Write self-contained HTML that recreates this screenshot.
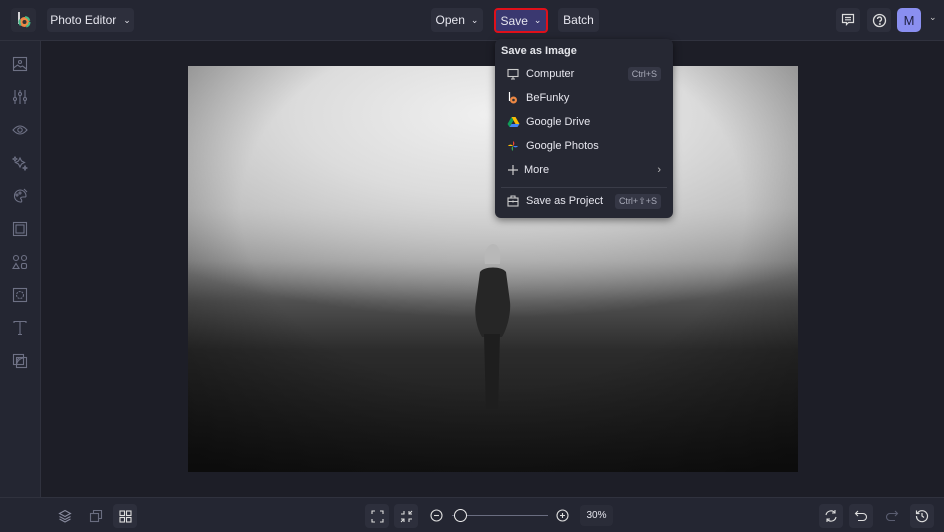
<!DOCTYPE html><html><head><style>
*{margin:0;padding:0;box-sizing:border-box}
body{width:944px;height:532px;background:#1d1e27;font-family:"Liberation Sans",sans-serif;position:relative;overflow:hidden;color:#e4e5ea}
.top{position:absolute;left:0;top:0;width:944px;height:41px;background:#242632;border-bottom:1px solid #30323e}
.side{position:absolute;left:0;top:41px;width:41px;height:456px;background:#242632;border-right:1px solid #30323e}
.bot{position:absolute;left:0;top:497px;width:944px;height:35px;background:#242632;border-top:1px solid #30323e}
.btn{position:absolute;background:#2d2f3c;border-radius:4px;font-size:12px;color:#e6e6ee;display:flex;align-items:center;justify-content:center}
.ib{position:absolute;width:24px;height:24px;background:#2d2f3c;border-radius:4px;display:flex;align-items:center;justify-content:center}
svg{display:block}
.photo{position:absolute;left:188px;top:66px;width:610px;height:406px;overflow:hidden;background:
radial-gradient(ellipse 80% 50% at 50% 12%,#f0f0f0 0%,#dcdcdc 40%,rgba(190,190,190,0) 100%),
linear-gradient(180deg,#b0b0b0 0%,#a8a8a8 35%,#8a8a8a 48%,#505050 58%,#2c2c2c 70%,#151515 100%)}
.vig{position:absolute;inset:0;background:radial-gradient(ellipse 75% 80% at 50% 35%,rgba(0,0,0,0) 55%,rgba(0,0,0,.45) 100%)}
.dd{position:absolute;left:495px;top:39px;width:178px;height:179px;background:#262833;border-radius:6px;box-shadow:0 2px 8px rgba(0,0,0,.5);font-size:11px}
.it{position:absolute;left:0;width:178px;height:20px;display:flex;align-items:center;padding-left:31px;color:#e6e6ee}
.ic{position:absolute;left:12px;top:4px}
.kb{position:absolute;right:12px;top:3px;background:#353745;color:#a8aab8;font-size:9px;padding:2px 4px;border-radius:3px}
.si{position:absolute;left:12px;width:16px;height:16px}
</style></head><body>
<div class="top"></div><div class="side"></div><div class="bot"></div>
<div class="ib" style="left:11px;top:8px;width:25px;background:#2a2c38"><svg width="16" height="18" viewBox="0 0 16 18"><path d="M3 1v12" stroke="#fff" stroke-width="1.6"/><circle cx="8.5" cy="11" r="5" fill="#e84"/><circle cx="8.5" cy="11" r="5" fill="none" stroke="#4b8" stroke-width="2" stroke-dasharray="6 6"/><circle cx="8.5" cy="11" r="2" fill="#333"/></svg></div>
<div class="btn" style="left:47px;top:8px;width:87px;height:24px">Photo Editor <span style="margin-left:7px;font-size:9px">⌄</span></div>
<div class="btn" style="left:431px;top:8px;width:52px;height:24px">Open <span style="margin-left:6px;font-size:9px">⌄</span></div>
<div class="btn" style="left:494px;top:8px;width:54px;height:25px;background:#3a3870;border:2px solid #e0101a">Save <span style="margin-left:6px;font-size:9px">⌄</span></div>
<div class="btn" style="left:558px;top:8px;width:41px;height:24px">Batch</div>
<div class="ib" style="left:836px;top:8px"><svg width="14" height="14" viewBox="0 0 14 14" fill="none" stroke="#ddd" stroke-width="1.2"><path d="M1.5 1.5h11v8h-5l-2 2v-2h-4z M4 4.5h6M4 6.8h6"/></svg></div>
<div class="ib" style="left:867px;top:8px"><svg width="15" height="15" viewBox="0 0 15 15" fill="none" stroke="#ddd" stroke-width="1.3"><circle cx="7.5" cy="7.5" r="6"/><path d="M5.5 6a2 2 0 1 1 2.5 2v1.3"/><circle cx="7.8" cy="11" r=".4"/></svg></div>
<div style="position:absolute;left:897px;top:8px;width:24px;height:24px;background:#8a8ff0;border-radius:5px;color:#1d1e40;font-size:13px;display:flex;align-items:center;justify-content:center">M</div>
<div style="position:absolute;left:929px;top:12px;font-size:9px;color:#ccc">⌄</div>
<svg class="si" style="top:56px" viewBox="0 0 16 16" fill="none" stroke="#6e7185" stroke-width="1.1"><rect x="1.5" y="1.5" width="13" height="13"/><circle cx="8" cy="6" r="1.5"/><path d="M1.5 12l4-3 3 2 2-1 4 3"/></svg>
<svg class="si" style="top:89px" viewBox="0 0 16 16" fill="none" stroke="#6e7185" stroke-width="1.1"><path d="M3 1v14M8 1v14M13 1v14"/><circle cx="3" cy="10" r="1.5" fill="#242632"/><circle cx="8" cy="5" r="1.5" fill="#242632"/><circle cx="13" cy="10" r="1.5" fill="#242632"/></svg>
<svg class="si" style="top:122px" viewBox="0 0 16 16" fill="none" stroke="#6e7185" stroke-width="1.1"><path d="M1 8q7-8 14 0q-7 8-14 0z"/><circle cx="8" cy="8" r="2.2"/></svg>
<svg class="si" style="top:155px" viewBox="0 0 16 16" fill="none" stroke="#6e7185" stroke-width="1.1"><path d="M8 3l1.5 3 3 1.5-3 1.5L8 12 6.5 9 3.5 7.5l3-1.5z M3 2l.7 1.3L5 4l-1.3.7L3 6 2.3 4.7 1 4l1.3-.7z M13 11l.6 1.4 1.4.6-1.4.6L13 15l-.6-1.4L11 13l1.4-.6z"/></svg>
<svg class="si" style="top:188px" viewBox="0 0 16 16" fill="none" stroke="#6e7185" stroke-width="1.1"><path d="M8 2a6 6 0 1 0 1 12c1 0 1-2 0-3s0-2 2-2h2a1 1 0 0 0 1-1A6 6 0 0 0 8 2z"/><circle cx="5" cy="7" r="1"/><circle cx="8" cy="5" r="1"/><path d="M12 1l3 3"/></svg>
<svg class="si" style="top:221px" viewBox="0 0 16 16" fill="none" stroke="#6e7185" stroke-width="1.1"><rect x="1.5" y="1.5" width="13" height="13"/><rect x="4" y="4" width="8" height="8"/></svg>
<svg class="si" style="top:254px" viewBox="0 0 16 16" fill="none" stroke="#6e7185" stroke-width="1.1"><circle cx="4" cy="4" r="2.5"/><circle cx="12" cy="4" r="2.5"/><path d="M4 9.5l3 5H1z"/><rect x="9.5" y="9.5" width="5" height="5" rx="1.5"/></svg>
<svg class="si" style="top:287px" viewBox="0 0 16 16" fill="none" stroke="#6e7185" stroke-width="1.1"><rect x="1.5" y="1.5" width="13" height="13"/><circle cx="8" cy="8" r="3.5" stroke-dasharray="2 1"/></svg>
<svg class="si" style="top:320px" viewBox="0 0 16 16" fill="none" stroke="#6e7185" stroke-width="1.1"><path d="M2 3V1.5h12V3M8 1.5v13M6 14.5h4"/></svg>
<svg class="si" style="top:353px" viewBox="0 0 16 16" fill="none" stroke="#6e7185" stroke-width="1.1"><rect x="1.5" y="1.5" width="10" height="10"/><rect x="4.5" y="4.5" width="10" height="10"/><path d="M4.5 9a5 5 0 0 1 5-4.5M4.5 12a8 8 0 0 1 7-7"/></svg>
<div class="photo"><div class="vig"></div>
<svg style="position:absolute;left:280px;top:176px" width="50" height="170" viewBox="0 0 50 170"><path d="M17 22c-2-10 2-20 8-20s8 8 7 20z" fill="#b8b8b8"/><path d="M12 30c4-6 22-6 26 0l4 30c1 10-2 25-8 35H14c-6-10-8-25-6-35z" fill="#262626"/><path d="M16 92h16l-2 75h-12z" fill="#1e1e1e"/></svg>
</div>
<div class="dd">
<div style="position:absolute;left:6px;top:6px;font-weight:bold;font-size:11px">Save as Image</div>
<div class="it" style="top:25px"><svg class="ic" width="12" height="12" viewBox="0 0 12 12" fill="none" stroke="#ccc" stroke-width="1.1"><rect x="1" y="1.5" width="10" height="7"/><path d="M4 11h4M6 8.5v2.5"/></svg>Computer<span class="kb">Ctrl+S</span></div>
<div class="it" style="top:49px"><svg class="ic" width="12" height="12" viewBox="0 0 12 12"><path d="M2.5 0v9" stroke="#fff" stroke-width="1.2"/><circle cx="6.5" cy="8" r="3.5" fill="#e84"/><circle cx="6.5" cy="8" r="1.3" fill="#333"/></svg>BeFunky</div>
<div class="it" style="top:73px"><svg class="ic" width="13" height="12" viewBox="0 0 13 12"><path d="M4.5 1h4l4 7h-4z" fill="#fbbc04"/><path d="M4.5 1l2 3.5L2.5 11 .5 8z" fill="#0f9d58"/><path d="M2.5 11l2-3h8l-2 3z" fill="#4285f4"/></svg>Google Drive</div>
<div class="it" style="top:97px"><svg class="ic" width="12" height="12" viewBox="0 0 12 12"><path d="M6 6V1a3 3 0 0 1 0 5z" fill="#ea4335"/><path d="M6 6h5a3 3 0 0 1-5 0z" fill="#4285f4"/><path d="M6 6v5a3 3 0 0 1 0-5z" fill="#34a853"/><path d="M6 6H1a3 3 0 0 1 5 0z" fill="#fbbc04"/></svg>Google Photos</div>
<div class="it" style="top:121px;padding-left:29px"><svg class="ic" width="12" height="12" viewBox="0 0 12 12" stroke="#ccc" stroke-width="1.2"><path d="M6 1v10M1 6h10"/></svg>More<span style="position:absolute;right:12px;color:#bbb">›</span></div>
<div style="position:absolute;left:6px;right:6px;top:148px;border-top:1px solid #3a3c48"></div>
<div class="it" style="top:152px"><svg class="ic" width="12" height="12" viewBox="0 0 12 12" fill="none" stroke="#ccc" stroke-width="1.1"><rect x="1" y="3" width="10" height="8"/><path d="M4 3V1h4v2M1 6.5h10M6 5.5v2"/></svg>Save as Project<span class="kb">Ctrl+⇧+S</span></div>
</div>
<div class="ib" style="left:53px;top:504px;background:none"><svg width="14" height="14" viewBox="0 0 14 14" fill="none" stroke="#8a8da0" stroke-width="1.1"><path d="M7 1.5l5.5 3L7 7.5 1.5 4.5z M1.5 7.5L7 10.5l5.5-3M1.5 10l5.5 3 5.5-3"/></svg></div>
<div class="ib" style="left:84px;top:504px;background:none"><svg width="14" height="14" viewBox="0 0 14 14" fill="none" stroke="#6a6d80" stroke-width="1.1"><rect x="1.5" y="4.5" width="8" height="8"/><path d="M4.5 4.5v-3h8v8h-3"/></svg></div>
<div class="ib" style="left:113px;top:504px"><svg width="13" height="13" viewBox="0 0 13 13" fill="none" stroke="#ddd" stroke-width="1.1"><rect x="1" y="1" width="4.5" height="4.5"/><rect x="7.5" y="1" width="4.5" height="4.5"/><rect x="1" y="7.5" width="4.5" height="4.5"/><rect x="7.5" y="7.5" width="4.5" height="4.5"/></svg></div>
<div class="ib" style="left:365px;top:504px"><svg width="13" height="13" viewBox="0 0 13 13" fill="none" stroke="#ddd" stroke-width="1.1"><path d="M1 4V1h3M9 1h3v3M12 9v3H9M4 12H1V9"/></svg></div>
<div class="ib" style="left:394px;top:504px"><svg width="13" height="13" viewBox="0 0 13 13" fill="none" stroke="#ddd" stroke-width="1.1"><path d="M1 4h3V1M12 4H9V1M1 9h3v3M12 9H9v3M9 4l3-3M4 9l-3 3"/></svg></div>
<svg style="position:absolute;left:430px;top:509px" width="13" height="13" viewBox="0 0 13 13" fill="none" stroke="#ddd" stroke-width="1.1"><circle cx="6.5" cy="6.5" r="5.5"/><path d="M4 6.5h5"/></svg>
<div style="position:absolute;left:452px;top:515px;width:96px;height:1px;background:#6a6d80"></div>
<div style="position:absolute;left:454px;top:509px;width:13px;height:13px;border:1.3px solid #eee;border-radius:50%;background:#242632"></div>
<svg style="position:absolute;left:556px;top:509px" width="13" height="13" viewBox="0 0 13 13" fill="none" stroke="#ddd" stroke-width="1.1"><circle cx="6.5" cy="6.5" r="5.5"/><path d="M4 6.5h5M6.5 4v5"/></svg>
<div class="btn" style="left:580px;top:505px;width:33px;height:21px;font-size:10px;background:#2a2c38">30%</div>
<div class="ib" style="left:819px;top:504px"><svg width="14" height="14" viewBox="0 0 14 14" fill="none" stroke="#ddd" stroke-width="1.1"><path d="M2 6a5 5 0 0 1 9-2M12 8a5 5 0 0 1-9 2M11 1v3H8M3 13v-3h3"/></svg></div>
<div class="ib" style="left:849px;top:504px"><svg width="14" height="14" viewBox="0 0 14 14" fill="none" stroke="#ddd" stroke-width="1.1"><path d="M4 2L1.5 4.5 4 7M1.5 4.5H9a3.5 3.5 0 0 1 0 7H4"/></svg></div>
<div class="ib" style="left:880px;top:504px;background:none"><svg width="14" height="14" viewBox="0 0 14 14" fill="none" stroke="#5a5d70" stroke-width="1.1"><path d="M10 2l2.5 2.5L10 7M12.5 4.5H5a3.5 3.5 0 0 0 0 7h5"/></svg></div>
<div class="ib" style="left:910px;top:504px"><svg width="14" height="14" viewBox="0 0 14 14" fill="none" stroke="#ddd" stroke-width="1.2"><path d="M2.5 4A5.5 5.5 0 1 1 1.5 7M1.5 1.5V4.5h3M7 4v3l2 1.5"/></svg></div>
</body></html>
